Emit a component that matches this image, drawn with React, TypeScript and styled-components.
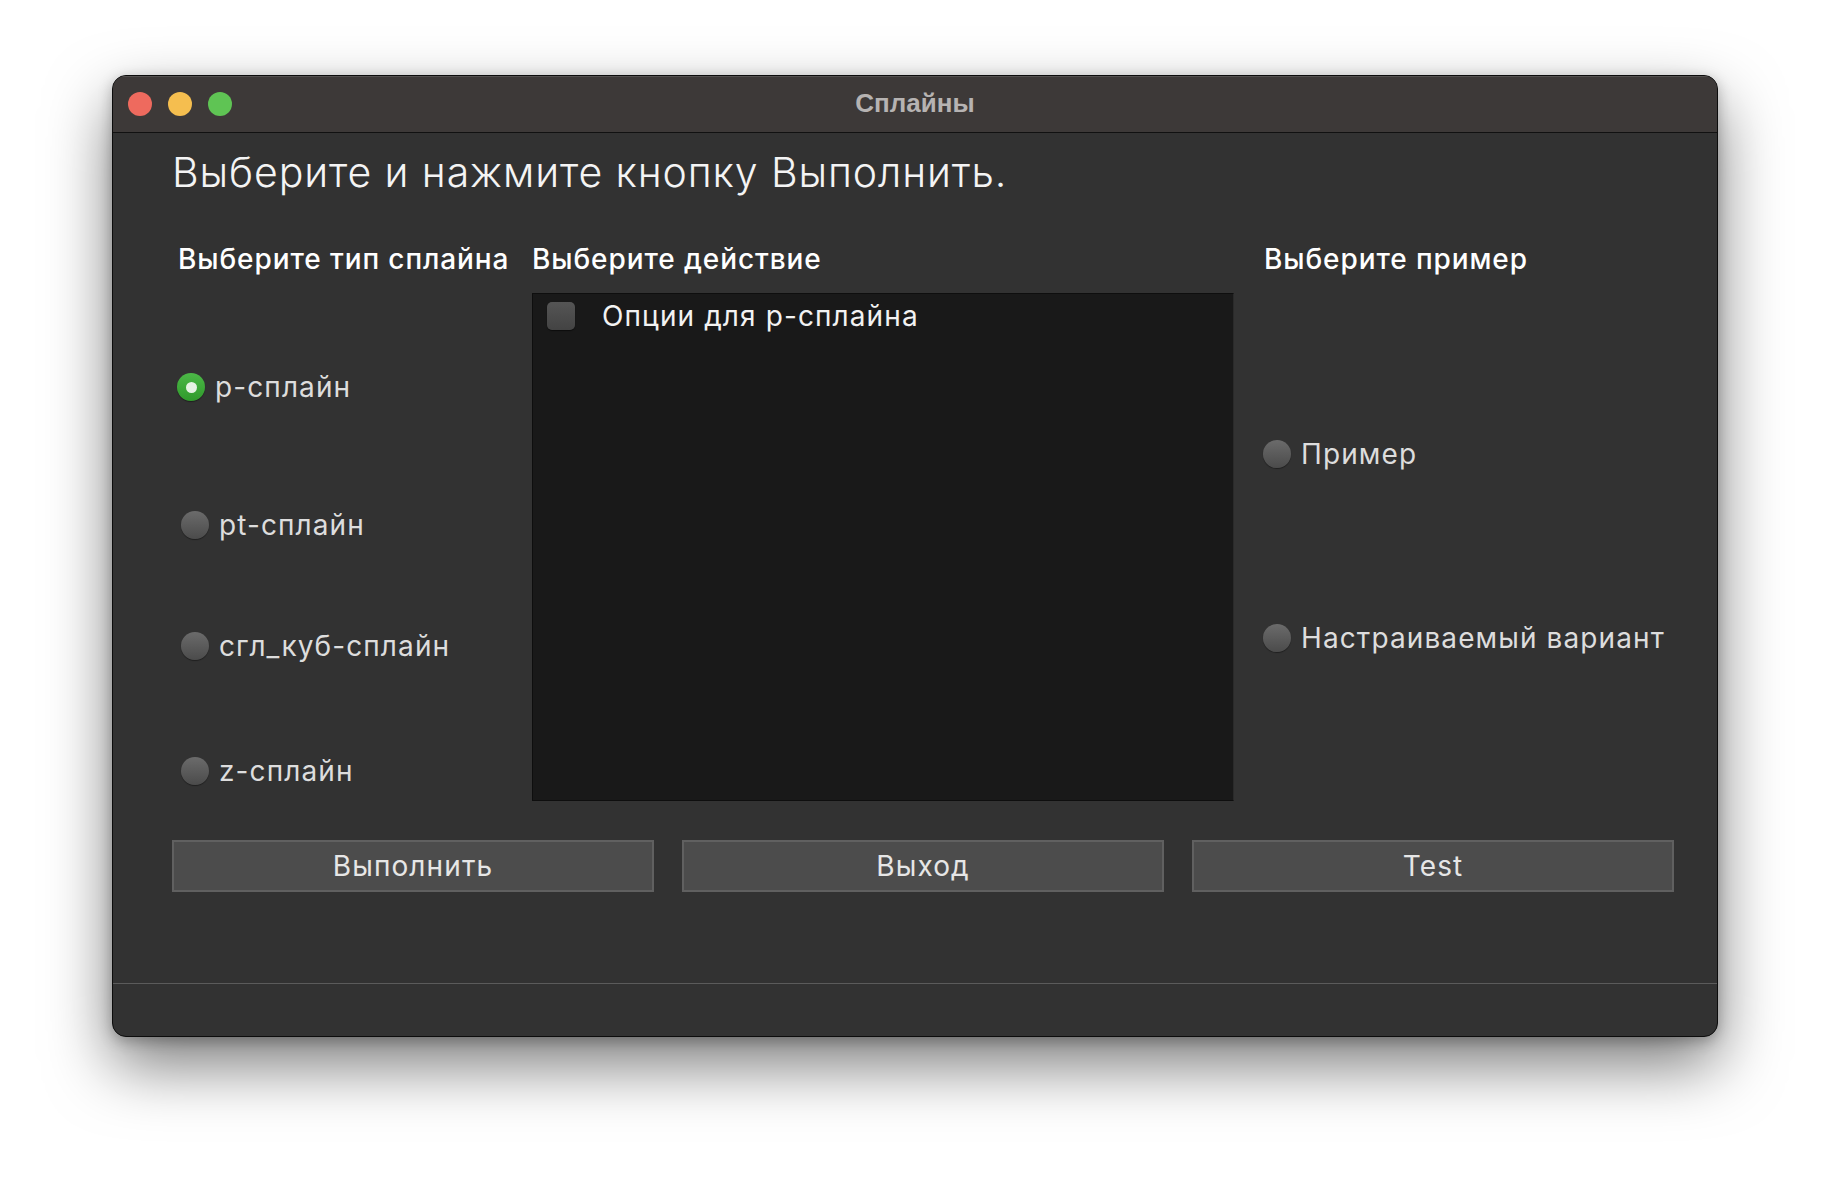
import React from "react";
import styled, { createGlobalStyle } from "styled-components";

const Global = createGlobalStyle`
  html, body { margin: 0; padding: 0; background: #ffffff; }
  body { font-family: "Inter", "Liberation Sans", sans-serif; }
  * { box-sizing: border-box; }
`;

const Page = styled.div`
  width: 1830px;
  height: 1186px;
  padding: 75px 0 0 112px;
  background: #ffffff;
`;

const Window = styled.div`
  width: 1606px;
  height: 962px;
  border-radius: 14px;
  background: #323232;
  border: 1px solid #0c0c0c;
  box-shadow: 0 28px 64px rgba(0, 0, 0, 0.52), 0 4px 14px rgba(0, 0, 0, 0.25);
  display: flex;
  flex-direction: column;
  overflow: hidden;
`;

const TitleBar = styled.div`
  height: 57px;
  flex: none;
  background: #3d3938;
  border-bottom: 1px solid #111;
  box-shadow: inset 0 1px 0 rgba(255, 255, 255, 0.12);
  display: grid;
  grid-template-columns: 1fr auto 1fr;
  align-items: center;
  padding: 0 15px;
`;

const Lights = styled.div`
  display: flex;
  gap: 16px;
`;

const Light = styled.span<{ $c: string }>`
  width: 24px;
  height: 24px;
  border-radius: 50%;
  background: ${(p) => p.$c};
`;

const Title = styled.div`
  font-family: "Liberation Sans", Arial, sans-serif;
  font-weight: 700;
  font-size: 26px;
  line-height: 26px;
  color: #b6b3b2;
  margin-top: -2px;
`;

const Body = styled.div`
  flex: 1;
  display: flex;
  flex-direction: column;
  padding: 0 44px 0 59px;
`;

const Heading = styled.h1`
  margin: 20px 0 0 0;
  font-family: "Inter", sans-serif;
  font-weight: 300;
  font-size: 41px;
  line-height: 39px;
  color: #f4f4f4;
  letter-spacing: 0.9px;
  white-space: nowrap;
`;

const Columns = styled.div`
  margin-top: 50px;
  display: grid;
  grid-template-columns: 360px 702px 1fr;
  grid-template-rows: 34px 508px;
  row-gap: 17px;
`;

const ColHeader = styled.div<{ $pad?: number }>`
  font-family: "Inter", sans-serif;
  font-weight: 500;
  font-size: 28px;
  line-height: 34px;
  letter-spacing: 0.9px;
  color: #ffffff;
  padding-left: ${(p) => p.$pad ?? 0}px;
  white-space: nowrap;
`;

const RadioColumn = styled.div<{ $pad?: number }>`
  display: flex;
  flex-direction: column;
  padding-left: ${(p) => p.$pad ?? 0}px;
`;

const RadioRow = styled.label<{ $top: number; $indent?: number }>`
  display: flex;
  align-items: center;
  gap: 10px;
  height: 34px;
  margin-top: ${(p) => p.$top}px;
  margin-left: ${(p) => p.$indent ?? 0}px;
  font-family: "Inter", sans-serif;
  font-size: 28px;
  letter-spacing: 1.1px;
  color: #dddddd;
  white-space: nowrap;
`;

const RadioDot = styled.span<{ $on?: boolean }>`
  width: 28px;
  height: 28px;
  flex: none;
  border-radius: 50%;
  display: flex;
  align-items: center;
  justify-content: center;
  background: ${(p) =>
    p.$on
      ? "linear-gradient(#4cb847, #2f9a2b)"
      : "linear-gradient(#6b6b6b, #4b4b4b)"};
  box-shadow: 0 1px 1px rgba(0, 0, 0, 0.4);
  &::after {
    content: "";
    display: ${(p) => (p.$on ? "block" : "none")};
    width: 11px;
    height: 11px;
    border-radius: 50%;
    background: #e6f3e4;
  }
`;

const ListBox = styled.div`
  background: #191919;
  border: 1px solid #0e0e0e;
  border-right-color: #2a2a2a;
  padding: 7px 14px;
`;

const CheckRow = styled.label`
  display: flex;
  align-items: center;
  gap: 27px;
  font-family: "Inter", sans-serif;
  font-size: 28px;
  letter-spacing: 1.1px;
  color: #f2f2f2;
  height: 30px;
  white-space: nowrap;
`;

const CheckBox = styled.span`
  width: 28px;
  height: 28px;
  flex: none;
  border-radius: 5px;
  background: linear-gradient(#555555, #434343);
  box-shadow: 0 1px 1px rgba(0, 0, 0, 0.5);
`;

const ButtonRow = styled.div`
  margin-top: 39px;
  display: grid;
  grid-template-columns: repeat(3, 482px);
  column-gap: 28px;
`;

const Button = styled.button`
  height: 52px;
  background: #4c4c4c;
  border: 2px solid #606060;
  color: #e6e6e6;
  font-family: "Inter", sans-serif;
  font-size: 28px;
  letter-spacing: 1.1px;
  padding: 0;
  cursor: pointer;
`;

const Spacer = styled.div`
  flex: 1;
`;

const StatusBar = styled.div`
  height: 53px;
  margin: 0 -44px 0 -59px;
  border-top: 1px solid #5b5b5b;
`;

export default function App() {
  return (
    <>
      <Global />
      <Page>
        <Window>
          <TitleBar>
            <Lights>
              <Light $c="#ee6a5e" />
              <Light $c="#f5be4f" />
              <Light $c="#5fc454" />
            </Lights>
            <Title>Сплайны</Title>
            <div />
          </TitleBar>
          <Body>
            <Heading>Выберите и нажмите кнопку Выполнить.</Heading>
            <Columns>
              <ColHeader $pad={6}>Выберите тип сплайна</ColHeader>
              <ColHeader>Выберите действие</ColHeader>
              <ColHeader $pad={30}>Выберите пример</ColHeader>

              <RadioColumn>
                <RadioRow $top={77} $indent={5}>
                  <RadioDot $on />
                  р-сплайн
                </RadioRow>
                <RadioRow $top={104} $indent={9}>
                  <RadioDot />
                  pt-сплайн
                </RadioRow>
                <RadioRow $top={87} $indent={9}>
                  <RadioDot />
                  сгл_куб-сплайн
                </RadioRow>
                <RadioRow $top={91} $indent={9}>
                  <RadioDot />
                  z-сплайн
                </RadioRow>
              </RadioColumn>

              <ListBox>
                <CheckRow>
                  <CheckBox />
                  Опции для р-сплайна
                </CheckRow>
              </ListBox>

              <RadioColumn $pad={29}>
                <RadioRow $top={144}>
                  <RadioDot />
                  Пример
                </RadioRow>
                <RadioRow $top={150}>
                  <RadioDot />
                  Настраиваемый вариант
                </RadioRow>
              </RadioColumn>
            </Columns>
            <ButtonRow>
              <Button>Выполнить</Button>
              <Button>Выход</Button>
              <Button>Test</Button>
            </ButtonRow>
            <Spacer />
            <StatusBar />
          </Body>
        </Window>
      </Page>
    </>
  );
}
